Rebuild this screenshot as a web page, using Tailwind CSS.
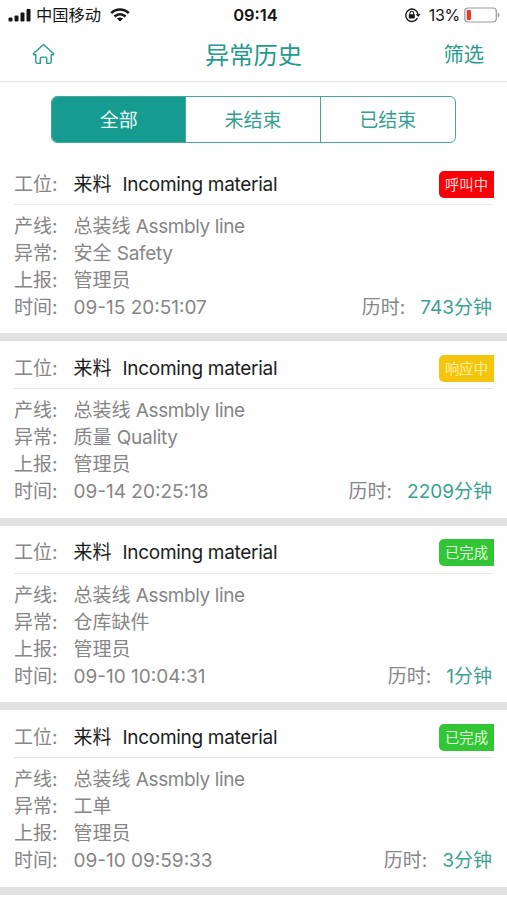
<!DOCTYPE html>
<html lang="zh-CN">
<head>
<meta charset="utf-8">
<title>异常历史</title>
<script src="https://cdn.jsdelivr.net/npm/@tailwindcss/browser@4"></script>
</head>
<body class="w-[507px] h-[900px] overflow-hidden bg-[#fefefe] font-['Inter','Noto_Sans_CJK_SC',sans-serif] text-[#868686]">
<header class="h-[82px] border-b border-[#e4e4e4]">
  <div class="grid h-[29px] grid-cols-3 items-center px-2 text-[#151515]">
    <div class="flex items-center">
      <svg class="h-[13px] w-[24px]" viewBox="0 0 24 13" fill="currentColor"><rect x="0.5" y="8.5" width="4" height="4" rx="1"/><rect x="6.5" y="6.5" width="4" height="6" rx="1"/><rect x="12.5" y="3.5" width="4" height="9" rx="1"/><rect x="18.5" y="0" width="4" height="12.5" rx="1"/></svg>
      <span class="ml-[4px] pt-[1px] text-[16.3px] leading-[29px]">中国移动</span>
      <svg class="ml-[9px] h-[14px] w-[20px]" viewBox="0 0 20 14" fill="none" stroke="currentColor" stroke-width="2.6"><path d="M1.2 5.1C6.2.2 13.8.2 18.8 5.1"/><path d="M4.5 8.5c3.2-3 7.8-3 11 0"/><path d="M10 13.6 6.9 10.6c1.8-1.5 4.4-1.5 6.2 0Z" fill="currentColor" stroke="none"/></svg>
    </div>
    <div class="pl-[4px] pt-[1px] text-center text-[16.5px] font-semibold">09:14</div>
    <div class="flex items-center justify-end">
      <svg class="h-[16px] w-[17px]" viewBox="0 0 17 16" fill="none" stroke="currentColor"><path d="M13.4 11.2A6.2 6.2 0 1 1 14 7" stroke-width="1.4"/><path d="m11.7 7.2 4.8-.2-2.3 3.1Z" fill="currentColor" stroke="none"/><rect x="4.8" y="7.2" width="6" height="4.2" rx=".6" fill="currentColor" stroke="none"/><path d="M6 7.5V6a1.8 1.8 0 0 1 3.6 0v1.5" stroke-width="1.1"/></svg>
      <span class="ml-[8px] text-[16px] tracking-[-0.3px]">13%</span>
      <svg class="ml-[4px] mr-[-2px] h-[16px] w-[37px]" viewBox="0 0 37 16"><rect x=".8" y="1" width="31.5" height="14" rx="3.5" fill="none" stroke="#999" stroke-width="1.2"/><rect x="2.7" y="3" width="4.3" height="10" rx="1.3" fill="#e63a2c"/><path d="M33.8 5.5c2.2.7 2.2 4.3 0 5Z" fill="#999"/></svg>
    </div>
  </div>
  <div class="grid h-[52px] grid-cols-3 items-center text-[#259c8b]">
    <svg class="ml-[32px] mt-[-2px] h-[22px] w-[23px]" viewBox="0 0 23 23" preserveAspectRatio="none" fill="none" stroke="currentColor" stroke-width="1.4" stroke-linejoin="round" stroke-linecap="round"><path d="M11.5 1.5 1.3 11.2c-.2.8.5 1.2 2.5 1V19.5c0 1.3.5 1.8 1.8 1.8h2.7v-5c0-1 .5-1.5 1.5-1.5h3.4c1 0 1.500.5 1.500 1.500v5h2.700c1.300 0 1.800-.5 1.800-1.800v-7.300c2 .2 2.700-.2 2.500-1Z"/></svg>
    <h1 class="text-center text-[24.3px] leading-[50px]">异常历史</h1>
    <span class="pr-[23px] pt-[1px] text-right text-[20.3px]">筛选</span>
  </div>
</header>
<main>
  <div class="flex h-[75px] justify-center pt-[14px]">
    <div class="grid h-[47px] w-[405px] grid-cols-3 divide-x-[1.5px] divide-[#4aa597] overflow-hidden rounded-[6px] border-[1.5px] border-[#4aa597] text-center text-[19px] leading-[48px] text-[#35a090]">
      <div class="bg-[#169b91] text-[#e9fffa]">全部</div><div>未结束</div><div>已结束</div>
    </div>
  </div>

  <section class="h-[184.4px] border-b-8 border-[#e2e2e2] px-[14px] text-[19px] leading-[27px]">
    <div class="flex h-[48px] items-center border-b border-[#ebebeb] pt-[7px]">
      <span class="w-[59.5px]">工位:</span><span class="text-[#1c1c1c]">来料</span><span class="ml-[11px] tracking-[-0.3px] text-[#1c1c1c]">Incoming material</span>
      <span class="mr-[-1px] ml-auto h-[27px] w-[55px] rounded-l-[5px] bg-[#fa0008] text-center text-[14.3px] text-[#ffd9d4]">呼叫中</span>
    </div>
    <div class="pt-[8px]">
      <div class="flex"><span class="w-[59.5px]">产线:</span><span>总装线 <span class="tracking-[-0.4px]">Assmbly line</span></span></div>
      <div class="flex"><span class="w-[59.5px]">异常:</span><span>安全 <span class="tracking-[-0.3px]">Safety</span></span></div>
      <div class="flex"><span class="w-[59.5px]">上报:</span><span>管理员</span></div>
      <div class="flex"><span class="w-[59.5px]">时间:</span><span>09-15 20:51:07</span><span class="ml-auto">历时:</span><span class="mr-[1px] ml-[15px] text-[#3aa38f]">743分钟</span></div>
    </div>
  </section>

  <section class="h-[184.4px] border-b-8 border-[#e2e2e2] px-[14px] text-[19px] leading-[27px]">
    <div class="flex h-[48px] items-center border-b border-[#e4e4e4] pt-[7px]">
      <span class="w-[59.5px]">工位:</span><span class="text-[#1c1c1c]">来料</span><span class="ml-[11px] tracking-[-0.3px] text-[#1c1c1c]">Incoming material</span>
      <span class="mr-[-1px] ml-auto h-[27px] w-[55px] rounded-l-[5px] bg-[#f5c50e] text-center text-[14.3px] text-[#fff0a0]">响应中</span>
    </div>
    <div class="pt-[8px]">
      <div class="flex"><span class="w-[59.5px]">产线:</span><span>总装线 <span class="tracking-[-0.4px]">Assmbly line</span></span></div>
      <div class="flex"><span class="w-[59.5px]">异常:</span><span>质量 <span class="tracking-[-0.3px]">Quality</span></span></div>
      <div class="flex"><span class="w-[59.5px]">上报:</span><span>管理员</span></div>
      <div class="flex"><span class="w-[59.5px]">时间:</span><span>09-14 20:25:18</span><span class="ml-auto">历时:</span><span class="mr-[1px] ml-[15px] text-[#3aa38f]">2209分钟</span></div>
    </div>
  </section>

  <section class="h-[184.4px] border-b-8 border-[#e2e2e2] px-[14px] text-[19px] leading-[27px]">
    <div class="flex h-[48px] items-center border-b border-[#ebebeb] pt-[6px]">
      <span class="w-[59.5px]">工位:</span><span class="text-[#1c1c1c]">来料</span><span class="ml-[11px] tracking-[-0.3px] text-[#1c1c1c]">Incoming material</span>
      <span class="mr-[-1px] ml-auto h-[27px] w-[55px] rounded-l-[5px] bg-[#32c535] text-center text-[14.3px] text-[#e0ffdc]">已完成</span>
    </div>
    <div class="pt-[8px]">
      <div class="flex"><span class="w-[59.5px]">产线:</span><span>总装线 <span class="tracking-[-0.4px]">Assmbly line</span></span></div>
      <div class="flex"><span class="w-[59.5px]">异常:</span><span>仓库缺件</span></div>
      <div class="flex"><span class="w-[59.5px]">上报:</span><span>管理员</span></div>
      <div class="flex"><span class="w-[59.5px]">时间:</span><span>09-10 10:04:31</span><span class="ml-auto">历时:</span><span class="mr-[1px] ml-[15px] text-[#3aa38f]">1分钟</span></div>
    </div>
  </section>

  <section class="h-[184.4px] border-b-8 border-[#e2e2e2] px-[14px] text-[19px] leading-[27px]">
    <div class="flex h-[48px] items-center border-b border-[#e4e4e4] pt-[7px]">
      <span class="w-[59.5px]">工位:</span><span class="text-[#1c1c1c]">来料</span><span class="ml-[11px] tracking-[-0.3px] text-[#1c1c1c]">Incoming material</span>
      <span class="mr-[-1px] ml-auto h-[27px] w-[55px] rounded-l-[5px] bg-[#32c535] text-center text-[14.3px] text-[#e0ffdc]">已完成</span>
    </div>
    <div class="pt-[8px]">
      <div class="flex"><span class="w-[59.5px]">产线:</span><span>总装线 <span class="tracking-[-0.4px]">Assmbly line</span></span></div>
      <div class="flex"><span class="w-[59.5px]">异常:</span><span>工单</span></div>
      <div class="flex"><span class="w-[59.5px]">上报:</span><span>管理员</span></div>
      <div class="flex"><span class="w-[59.5px]">时间:</span><span>09-10 09:59:33</span><span class="ml-auto">历时:</span><span class="mr-[1px] ml-[15px] text-[#3aa38f]">3分钟</span></div>
    </div>
  </section>
</main>
</body>
</html>
